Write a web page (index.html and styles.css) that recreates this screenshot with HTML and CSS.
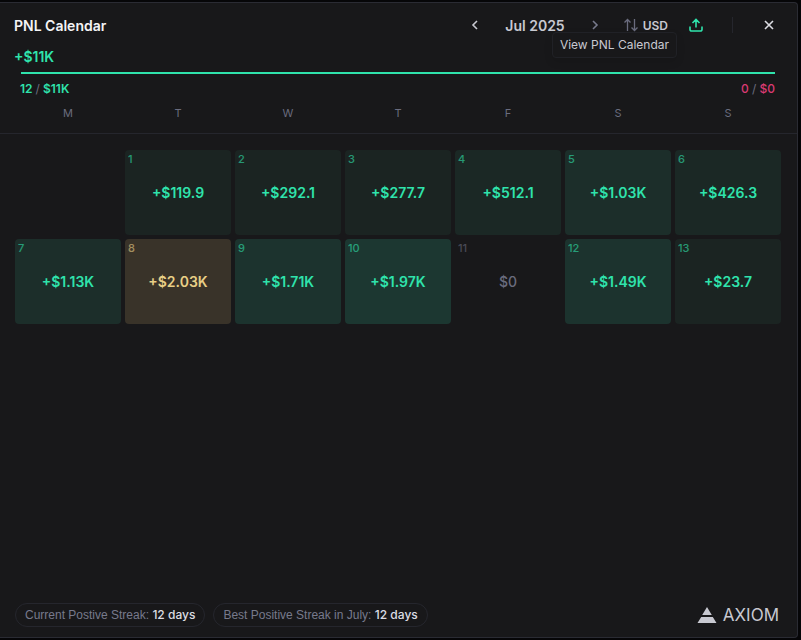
FILE: index.html
```html
<!DOCTYPE html>
<html lang="en">

<head>
    <meta charset="UTF-8">
    <meta name="viewport" content="width=device-width, initial-scale=1.0">
    <title>PNL Calendar</title>
    <link rel="stylesheet" href="styles.css">
</head>

<body>
    <main class="modal">
        <header class="modal-header">
            <h1 class="title">PNL Calendar</h1>
            <div class="month-nav">
                <button class="icon-button" type="button" aria-label="Previous month">
                    <svg width="16" height="16" viewBox="0 0 16 16"><path d="M10 4 6 8l4 4" /></svg>
                </button>
                <span class="month">Jul 2025</span>
                <button class="icon-button muted" type="button" aria-label="Next month">
                    <svg width="16" height="16" viewBox="0 0 16 16"><path d="M6 4l4 4-4 4" /></svg>
                </button>
            </div>
            <button class="currency" type="button">
                <svg width="16" height="16" viewBox="0 0 16 16"><path d="M4.500 14V2.500M1.500 5.500l3-3 3 3M11.500 2v11.500M8.500 10.500l3 3 3-3" /></svg>
                USD
            </button>
            <button class="icon-button share" type="button" aria-label="Share">
                <svg width="16" height="16" viewBox="0 0 16 16"><path d="M8 10.500V2.500M4.500 6 8 2.500 11.500 6M2 9.500v3a1.500 1.500 0 0 0 1.500 1.500h9a1.500 1.500 0 0 0 1.500-1.500v-3" /></svg>
            </button>
            <span class="divider"></span>
            <button class="icon-button close" type="button" aria-label="Close">
                <svg width="16" height="16" viewBox="0 0 16 16"><path d="m4 4 8 8M12 4l-8 8" /></svg>
            </button>
            <div class="tooltip" role="tooltip">View PNL Calendar</div>
        </header>

        <!-- Monthly summary -->
        <section class="summary">
            <div class="total">+$11K</div>
            <div class="bar"></div>
            <div class="counts">
                <span class="wins">12 <i>/</i> $11K</span>
                <span class="losses">0 <i>/</i> $0</span>
            </div>
        </section>

        <table class="calendar">
            <thead>
                <tr>
                    <th scope="col">M</th>
                    <th scope="col">T</th>
                    <th scope="col">W</th>
                    <th scope="col">T</th>
                    <th scope="col">F</th>
                    <th scope="col">S</th>
                    <th scope="col">S</th>
                </tr>
            </thead>
            <tbody>
                <tr>
                    <td class="day"></td>
                    <td class="day gain-1"><span class="date">1</span>+$119.9</td>
                    <td class="day gain-1"><span class="date">2</span>+$292.1</td>
                    <td class="day gain-1"><span class="date">3</span>+$277.7</td>
                    <td class="day gain-2"><span class="date">4</span>+$512.1</td>
                    <td class="day gain-3"><span class="date">5</span>+$1.03K</td>
                    <td class="day gain-2"><span class="date">6</span>+$426.3</td>
                </tr>
                <tr>
                    <td class="day gain-3"><span class="date">7</span>+$1.13K</td>
                    <td class="day best"><span class="date">8</span>+$2.03K</td>
                    <td class="day gain-4"><span class="date">9</span>+$1.71K</td>
                    <td class="day gain-5"><span class="date">10</span>+$1.97K</td>
                    <td class="day flat"><span class="date">11</span>$0</td>
                    <td class="day gain-4"><span class="date">12</span>+$1.49K</td>
                    <td class="day gain-1"><span class="date">13</span>+$23.7</td>
                </tr>
            </tbody>
        </table>

        <footer class="modal-footer">
            <div class="streak">Current Postive Streak: <b>12 days</b></div>
            <div class="streak">Best Positive Streak in July: <b>12 days</b></div>
            <div class="brand">
                <svg width="20" height="18" viewBox="0 0 20 18"><path d="M10 1 14.800 9H5.200zM4.200 11h11.600L19.500 17H.5z" /></svg>
                AXIOM
            </div>
        </footer>
    </main>
</body>

</html>
```
FILE: styles.css
```css
* {
    margin: 0;
    padding: 0;
    box-sizing: border-box;
}

body {
    min-height: 100vh;
    display: flex;
    padding: 2px 3px 2px 0;
    background-color: #060608;
    color: #c8c9d1;
    font-family: Inter, "Liberation Sans", sans-serif;
    font-size: 12px;
}

button {
    border: none;
    background: none;
    color: inherit;
    font: inherit;
    cursor: pointer;
}

svg {
    display: block;
    fill: none;
    stroke: currentColor;
    stroke-width: 1.6;
}

.modal {
    flex: 1;
    display: flex;
    flex-direction: column;
    background-color: #18181a;
    border: 1px solid #2a2b33;
    border-left: none;
    border-radius: 0 4px 4px 0;
}

.modal-header {
    position: relative;
    display: flex;
    align-items: center;
    height: 44px;
    padding: 0 20px 0 14px;
}

.title {
    flex: 1;
    color: #f4f4f6;
    font-size: 14px;
    font-weight: 600;
}

.month-nav {
    display: flex;
    align-items: center;
    gap: 22px;
}

.month {
    font-size: 14px;
    font-weight: 600;
}

.muted {
    color: #777a8c;
}

.currency {
    display: flex;
    align-items: center;
    gap: 4px;
    margin-left: 20px;
    font-weight: 600;
}

.currency svg {
    color: #6a6c7e;
    stroke-width: 1.3;
}

.share {
    margin-left: 20px;
    color: #2fe3ac;
}

.divider {
    width: 1px;
    height: 16px;
    margin: 0 28px;
    background-color: #25262d;
}

.close {
    color: #dcdde3;
}

.tooltip {
    position: absolute;
    top: 29px;
    right: 120px;
    padding: 0 7px;
    border: 1px solid #202126;
    border-radius: 4px;
    background-color: #18181a;
    box-shadow: 0 4px 8px rgba(0, 0, 0, 0.1);
    line-height: 24px;
}

/* Summary */
.summary {
    padding: 0 22px 0 14px;
    color: #2fe3ac;
}

.total {
    font-size: 14px;
    font-weight: 600;
    line-height: 20px;
}

.bar {
    height: 2px;
    margin: 5px 0 6px 7px;
    background-color: #2fe3ac;
}

.counts {
    display: flex;
    justify-content: space-between;
    padding-left: 6px;
    font-weight: 600;
    line-height: 18px;
}

.counts i {
    color: #6a6c7e;
    font-style: normal;
    font-weight: 400;
}

.losses {
    color: #d93a72;
    font-weight: 500;
}

/* Calendar */
.calendar,
.calendar thead,
.calendar tbody {
    display: block;
}

.calendar thead {
    border-bottom: 1px solid #25262d;
}

.calendar tbody {
    padding-top: 16px;
}

.calendar tr {
    display: grid;
    grid-template-columns: repeat(7, 1fr);
    gap: 4px;
    padding: 0 16px 4px 15px;
}

.calendar th {
    padding: 7px 0 8px;
    color: #6a6c7e;
    font-size: 11px;
    font-weight: 400;
    line-height: 16px;
}

.day {
    position: relative;
    display: flex;
    align-items: center;
    justify-content: center;
    aspect-ratio: 5 / 4;
    border-radius: 4px;
    color: #2fe3ac;
    font-size: 14px;
    font-weight: 600;
}

.date {
    position: absolute;
    top: 1px;
    left: 3px;
    font-size: 11px;
    font-weight: 500;
    line-height: 16px;
    opacity: 0.6;
}

.gain-1 {
    background-color: #1b2422;
}

.gain-2 {
    background-color: #1b2825;
}

.gain-3 {
    background-color: #1c2e2a;
}

.gain-4 {
    background-color: #1c332e;
}

.gain-5 {
    background-color: #1c3731;
}

.best {
    background-color: #393329;
    color: #e8cf86;
}

.flat {
    color: #6a6c7e;
    font-weight: 500;
}

/* Footer */
.modal-footer {
    display: flex;
    align-items: center;
    gap: 8px;
    margin-top: auto;
    padding: 0 18px 10px 15px;
}

.streak {
    padding: 0 9px;
    border: 1px solid #25262d;
    border-radius: 12px;
    color: #777a8c;
    font-family: "Liberation Sans", Arial, sans-serif;
    line-height: 22px;
}

.streak b {
    color: #dcdde3;
    font-family: Inter, "Liberation Sans", sans-serif;
    font-weight: 500;
}

.brand {
    display: flex;
    align-items: center;
    gap: 6px;
    margin-left: auto;
    font-size: 17px;
    line-height: 20px;
}

.brand svg {
    fill: currentColor;
    stroke: none;
}
```
